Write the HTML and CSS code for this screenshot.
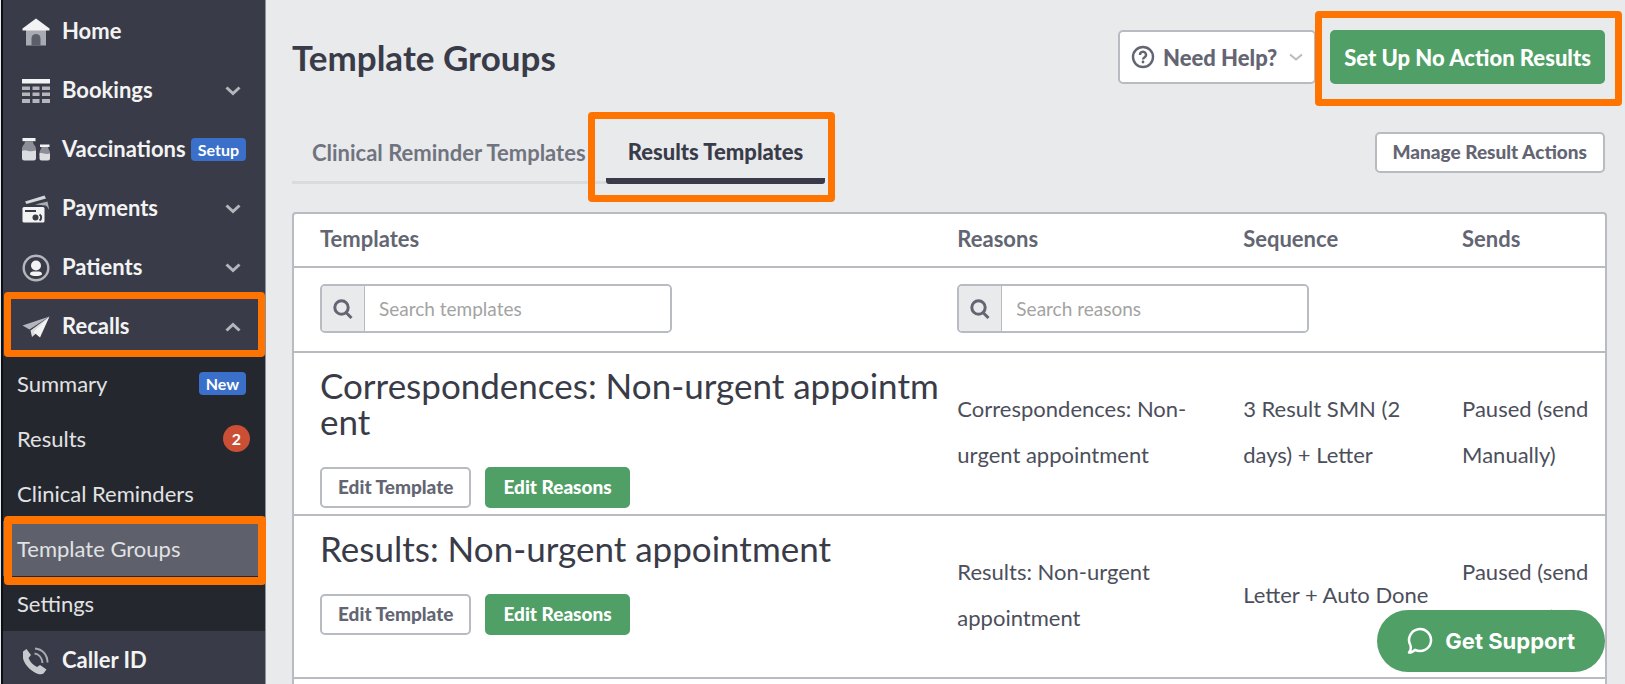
FILE: index.html
```html
<!DOCTYPE html>
<html lang="en">
<head>
<meta charset="utf-8">
<title>Template Groups</title>
<link rel="stylesheet" href="styles.css">
</head>
<body>
<div class="app">
  <nav class="sidebar" aria-label="Main">
    <ul class="nav">
      <li><a class="nav-link" href="#">
        <svg class="nav-icon" viewBox="0 0 28 28"><path fill="#a9abb2" d="M4 12h20v15.500H4z"/><path fill="#5c5f6a" d="M9.500 27.500v-7a4.500 4.500 0 0 1 9 0v7z"/><path fill="#f3f3f4" d="M14 0.500 27.500 10.500v2H.5v-2z"/></svg>
        <span class="nav-text">Home</span></a></li>
      <li><a class="nav-link" href="#">
        <svg class="nav-icon" viewBox="0 0 28 28"><path fill="#f3f3f4" d="M0 2h28v4.500H0z"/><path fill="#b4b6bc" d="M0 9.500h8v3.500H0zM10.500 9.500h7v3.500h-7zM20 9.500h8v3.500h-8zM0 15.500h8V19H0zM10.500 15.500h7V19h-7zM20 15.500h8V19h-8zM0 22h8v4H0zM10.500 22h7v4h-7zM20 22h8v4h-8z"/></svg>
        <span class="nav-text">Bookings</span>
        <svg class="chevron" viewBox="0 0 16 10"><path d="M1.500 1.500 8 7.500l6.500-6"/></svg></a></li>
      <li><a class="nav-link" href="#">
        <svg class="nav-icon" viewBox="0 0 28 28"><path fill="#f3f3f4" d="M0.500 2h13v3.200H.5z"/><path fill="#8b8e97" d="M3 5.200h8c0 4 3 4 3 8V16H0v-3c0-4 3-4 3-7.800z"/><path fill="#dcdde0" d="M0 15c4-2.500 6 2 14-.5V22a2.500 2.500 0 0 1-2.500 2.500h-9A2.500 2.500 0 0 1 0 22z"/><path fill="#f3f3f4" d="M18 8.500h9.500v2.500H18z"/><path fill="#8b8e97" d="M19.500 11h6.500c0 2.500 2 3 2 6v2H17.500v-2c0-3 2-3.500 2-6z"/><path fill="#dcdde0" d="M17.500 17.500c3-1.500 5 1.500 10.500 0V22.500a2 2 0 0 1-2 2h-6.500a2 2 0 0 1-2-2z"/></svg>
        <span class="nav-text">Vaccinations</span>
        <span class="tag tag-end">Setup</span></a></li>
      <li><a class="nav-link" href="#">
        <svg class="nav-icon" viewBox="0 0 28 28"><path fill="#d5d6d9" d="M3 6.500 22.500.5l1.500 3L4.500 9z"/><path fill="#a9abb2" d="M13 9.500 25.500 6.500l1.800 8.500-2.300-3.500-1.500-1z"/><rect x="0.500" y="12" width="22" height="15.500" rx="1.500" fill="#f3f3f4"/><path fill="#393c48" d="M3 15h11v2H3z"/><circle cx="13.500" cy="22.500" r="3" fill="#393c48"/><path d="M17.500 19.500a3.500 3.500 0 0 1 0 6" fill="none" stroke="#393c48" stroke-width="2"/></svg>
        <span class="nav-text">Payments</span>
        <svg class="chevron" viewBox="0 0 16 10"><path d="M1.500 1.500 8 7.500l6.500-6"/></svg></a></li>
      <li><a class="nav-link" href="#">
        <svg class="nav-icon" viewBox="0 0 28 28"><circle cx="14" cy="14" r="12.300" fill="none" stroke="#b4b6bc" stroke-width="2.400"/><circle cx="14" cy="11.500" r="5" fill="#f3f3f4"/><path fill="#f3f3f4" d="M8 20.500c0-3 2.500-3 4-3h4c1.500 0 4 0 4 3-3 2-9 2-12 0z"/></svg>
        <span class="nav-text">Patients</span>
        <svg class="chevron" viewBox="0 0 16 10"><path d="M1.500 1.500 8 7.500l6.500-6"/></svg></a></li>
      <li class="marked"><a class="nav-link" href="#" aria-expanded="true">
        <svg class="nav-icon" viewBox="0 0 28 28"><path fill="#b4b6bc" d="M27.500 3.500 0.500 12.500l7 4z"/><path fill="#dcdde0" d="M27.500 3.500 8.500 17.500l1.500 6.500 4-3.500z"/><path fill="#f3f3f4" d="M27.500 3.500 11.500 19l6.500 5.500z"/></svg>
        <span class="nav-text">Recalls</span>
        <svg class="chevron" viewBox="0 0 16 10"><path d="M1.500 8.500 8 2.500l6.500 6"/></svg></a>
        <span class="highlight highlight-nav"></span></li>
    </ul>
    <ul class="subnav">
      <li><a class="sub-link" href="#">Summary <span class="tag tag-end">New</span></a></li>
      <li><a class="sub-link" href="#">Results <span class="count">2</span></a></li>
      <li><a class="sub-link" href="#">Clinical Reminders</a></li>
      <li class="marked"><a class="sub-link current" href="#" aria-current="page">Template Groups</a><span class="highlight highlight-sub"></span></li>
      <li><a class="sub-link" href="#">Settings</a></li>
    </ul>
    <ul class="nav">
      <li><a class="nav-link" href="#">
        <svg class="nav-icon" viewBox="0 0 28 28"><path fill="#c9cacf" d="M1 4.500 4.500 2 9 8l-2.500 3c1.500 4 4.500 7 8.500 9l3-2 6.500 4.500-3 4c-2 1.500-6 .8-9.500-1.500C6 21.500 2 16 1 11z"/><path d="M12.500 6.500c4 .5 7.500 4 8 9.500M13 1.500c7 .5 12.500 6 12.500 14" fill="none" stroke="#a9abb2" stroke-width="2"/></svg>
        <span class="nav-text">Caller ID</span></a></li>
    </ul>
  </nav>

  <main class="main">
    <header class="page-head">
      <h1>Template Groups</h1>
      <div class="head-actions">
        <button class="btn btn-help" type="button">
          <svg class="help-icon" viewBox="0 0 24 24"><circle cx="12" cy="12" r="10" fill="none" stroke="#636672" stroke-width="2.400"/><path d="M9 10a3 3 0 1 1 4.600 2.300c-1 .7-1.600 1-1.600 2.200" fill="none" stroke="#636672" stroke-width="2.400"/><circle cx="12" cy="17" r="1.400" fill="#636672"/></svg>
          Need Help?
          <svg class="help-chevron" viewBox="0 0 14 8"><path d="M1 1.500 7 6.500l6-5"/></svg>
        </button>
        <div class="marked">
          <button class="btn btn-green btn-large" type="button">Set Up No Action Results</button>
          <span class="highlight highlight-action"></span>
        </div>
      </div>
    </header>

    <div class="tab-bar">
      <div class="tabs" role="tablist">
        <button class="tab" type="button" role="tab" aria-selected="false">Clinical Reminder Templates</button>
        <div class="marked">
          <button class="tab tab-active" type="button" role="tab" aria-selected="true">Results Templates</button>
          <span class="highlight highlight-tab"></span>
        </div>
      </div>
      <button class="btn btn-small" type="button">Manage Result Actions</button>
    </div>

    <table class="grid">
      <colgroup><col class="col-templates"><col class="col-reasons"><col class="col-sequence"><col class="col-sends"></colgroup>
      <thead>
        <tr class="heads"><th scope="col">Templates</th><th scope="col">Reasons</th><th scope="col">Sequence</th><th scope="col">Sends</th></tr>
        <tr class="filters">
          <td><div class="search"><label for="q-templates" aria-label="Search templates"><svg viewBox="0 0 20 20"><circle cx="8.500" cy="8.500" r="6.700"/><path d="m13 13.500 5.500 5.500"/></svg></label><input id="q-templates" type="text" placeholder="Search templates"></div></td>
          <td colspan="3"><div class="search"><label for="q-reasons" aria-label="Search reasons"><svg viewBox="0 0 20 20"><circle cx="8.500" cy="8.500" r="6.700"/><path d="m13 13.500 5.500 5.500"/></svg></label><input id="q-reasons" type="text" placeholder="Search reasons"></div></td>
        </tr>
      </thead>
      <tbody>
        <tr>
          <td class="template"><h2>Correspondences: Non-urgent appointment</h2><div class="row-actions"><button class="btn btn-small" type="button">Edit Template</button><button class="btn btn-small btn-green" type="button">Edit Reasons</button></div></td>
          <td>Correspondences: Non-urgent appointment</td>
          <td>3 Result SMN (2 days) + Letter</td>
          <td>Paused (send Manually)</td>
        </tr>
        <tr>
          <td class="template"><h2>Results: Non-urgent appointment</h2><div class="row-actions"><button class="btn btn-small" type="button">Edit Template</button><button class="btn btn-small btn-green" type="button">Edit Reasons</button></div></td>
          <td>Results: Non-urgent appointment</td>
          <td>Letter + Auto Done</td>
          <td>Paused (send Manually)</td>
        </tr>
        <tr><td></td><td></td><td></td><td></td></tr>
      </tbody>
    </table>
  </main>

  <button class="support" type="button">
    <svg viewBox="0 0 26 28"><path d="M3.500 18.500A11 11 0 1 1 8 22.800c-1.500 1.700-3.500 2.700-6 2.700 1.500-1.500 2.200-4 1.500-7z"/></svg>
    Get Support
  </button>
</div>
</body>
</html>
```
FILE: styles.css
```css
* { box-sizing: border-box; }

body {
  margin: 0;
  background: #e9eaec;
  color: #393c48;
  font-family: Lato, "Liberation Sans", sans-serif;
  font-size: 22px;
}

button, input { font: inherit; color: inherit; }
button { cursor: pointer; }
ul { list-style: none; margin: 0; padding: 0; }
a { color: inherit; text-decoration: none; }

.app { display: flex; height: 100vh; overflow: hidden; }

.marked { position: relative; }
.highlight {
  position: absolute;
  z-index: 2;
  border: 7px solid #ff7300;
  border-radius: 4px;
  pointer-events: none;
}
.highlight-nav { inset: -5px 0 -1px 1px; }
.highlight-sub { inset: -5px -1px -9px 1px; border-width: 8px; }
.highlight-action { inset: -19px -17px -22px -15px; }
.highlight-tab { inset: -12px -10px -18px -18px; }

/* Sidebar */
.sidebar {
  flex: none;
  width: 265px;
  margin-left: 1px;
  padding-top: 2px;
  background: #393c48;
  border-left: 2px solid #0c1016;
  border-right: 1px solid #8f929a;
}
.nav-link {
  display: flex;
  align-items: center;
  height: 59px;
  padding: 0 24px 0 19px;
  color: #f3f3f4;
  font-weight: 700;
}
.nav-icon { width: 28px; height: 28px; flex: none; margin-right: 12px; }
.nav-text { padding-bottom: 2px; }
.chevron { width: 16px; height: 10px; margin-left: auto; }
.chevron path { fill: none; stroke: #b4b6bc; stroke-width: 3; }

.tag {
  padding: 0 7px;
  border-radius: 4px;
  background: #3a6fca;
  color: #fff;
  font-size: 16px;
  font-weight: 700;
  line-height: 23px;
}
.tag-end { margin-left: auto; margin-right: -5px; }

.subnav { background: #25272e; }
.sub-link {
  display: flex;
  align-items: center;
  height: 55px;
  padding: 0 24px 0 14px;
  color: #e1e2e4;
}
.current { background: #5e616c; }
.count {
  width: 27px;
  margin-left: auto;
  margin-right: -9px;
  border-radius: 50%;
  background: #ca4f35;
  color: #fff;
  font-size: 16px;
  font-weight: 700;
  line-height: 27px;
  text-align: center;
}

/* Page */
.main { flex: 1; min-width: 0; padding: 30px 18px 0 26px; }
.page-head, .tab-bar {
  display: flex;
  align-items: center;
  justify-content: space-between;
  padding-right: 2px;
}
h1 { margin: 0; font-size: 35px; line-height: 54px; }
.head-actions { display: flex; gap: 14px; }

.btn {
  display: inline-flex;
  align-items: center;
  border: 2px solid #b9bbc2;
  border-radius: 5px;
  background: #fff;
  color: #636672;
  font-weight: 900;
  white-space: nowrap;
}
.btn-green { border-color: #4f9f66; background: #4f9f66; color: #fff; }
.btn-large { height: 54px; padding: 0 12px; }
.btn-help { height: 54px; padding: 0 11px; gap: 8px; }
.btn-small { height: 41px; padding: 0 16px 2px; font-size: 19px; }
.help-icon { width: 24px; height: 24px; }
.help-chevron { width: 14px; height: 8px; margin-left: 4px; }
.help-chevron path { fill: none; stroke: #b9bbc2; stroke-width: 2; }

.tab-bar { margin-top: 40px; height: 60px; align-items: flex-start; }
.tab-bar .btn { margin-top: 8px; }
.tabs { display: flex; align-items: flex-end; }
.tab {
  height: 58px;
  padding: 0 20px 2px;
  border: 0;
  border-bottom: 3px solid #d9dbde;
  background: none;
  color: #71747f;
  font-weight: 700;
  white-space: nowrap;
}
.tab-active {
  height: 60px;
  padding: 0 22px;
  border-bottom: 6px solid #393c48;
  border-radius: 3px;
  color: #393c48;
  font-weight: 900;
}

/* Table */
.grid {
  width: 100%;
  margin-top: 28px;
  border: 2px solid #b9bbc2;
  border-collapse: separate;
  border-spacing: 0;
  border-radius: 4px;
  background: #fff;
  table-layout: fixed;
}
.col-templates { width: 50.6%; }
.col-reasons { width: 21.8%; }
.col-sequence { width: 16.7%; }
.grid th, .grid td {
  padding: 0 12px 4px 0;
  border-bottom: 2px solid #b9bbc2;
  text-align: left;
}
.grid tr > :first-child { padding-left: 26px; }
.heads th { height: 54px; color: #636672; }
.grid .filters td { height: 85px; padding-bottom: 2px; }
.grid tbody td { height: 163px; line-height: 46px; color: #4c4f5b; }
.grid tbody .template { padding: 14px 6px 4px 26px; vertical-align: top; }
h2 {
  margin: 0 0 28px;
  color: #393c48;
  font-size: 35px;
  font-weight: 400;
  line-height: 36px;
  word-break: break-all;
}
.row-actions { display: flex; gap: 14px; }

.search { display: flex; width: 352px; height: 49px; border: 2px solid #b9bbc2; border-radius: 5px; overflow: hidden; }
.search label {
  display: flex;
  align-items: center;
  justify-content: center;
  flex: none;
  width: 43px;
  background: #e9eaec;
  border-right: 1px solid #b9bbc2;
}
.search svg { width: 20px; height: 20px; fill: none; stroke: #636672; stroke-width: 3; }
.search input { flex: 1; min-width: 0; padding: 0 14px; border: 0; background: #fff; font-size: 19px; }
.search input::placeholder { color: #a3a3a3; opacity: 1; }

.support {
  position: fixed;
  right: 20px;
  bottom: 12px;
  z-index: 3;
  display: flex;
  align-items: center;
  gap: 12px;
  height: 62px;
  padding: 0 30px;
  border: 0;
  border-radius: 31px;
  background: #4f9f66;
  color: #fff;
  font-family: Inter, "Liberation Sans", sans-serif;
  font-size: 22px;
  font-weight: 700;
}
.support svg { width: 26px; height: 28px; fill: none; stroke: #fff; stroke-width: 2.500; stroke-linejoin: round; }
```
